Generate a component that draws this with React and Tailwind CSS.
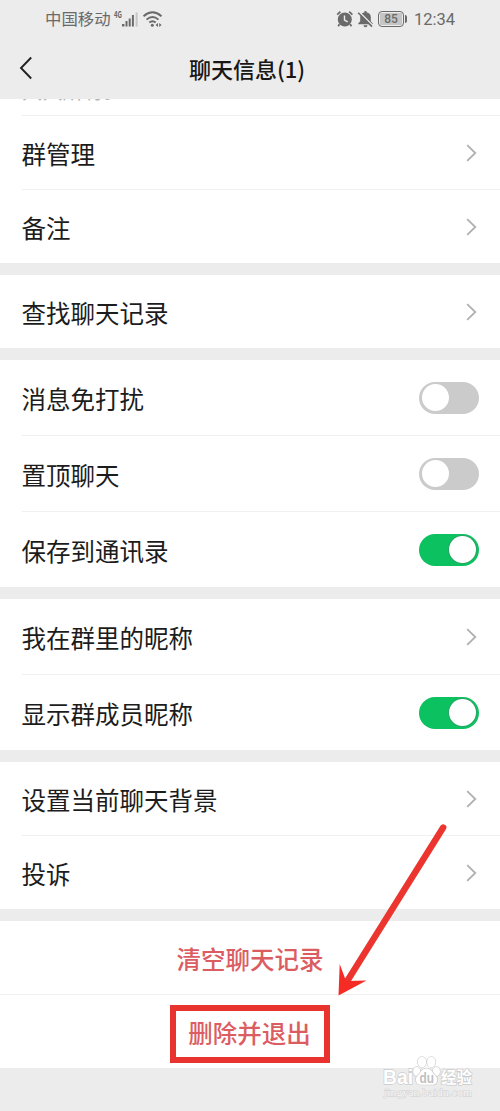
import React from "react";

function Chevron() {
  return (
    <svg className="mr-[23px] h-[18px] w-[11px]" viewBox="0 0 11 18" fill="none" stroke="#b0b0b0" strokeWidth="1.8">
      <path d="M1.2 1.2 L9.3 9 L1.2 16.8" />
    </svg>
  );
}

function Toggle({ on }) {
  return (
    <span
      className={
        "mr-[21px] flex h-8 w-[60px] items-center rounded-full px-[3px] " +
        (on ? "justify-end bg-[#0bc160]" : "justify-start bg-[#cbcbcb]")
      }
    >
      <span className={"h-[27px] w-[27px] rounded-full bg-white " + (on ? "shadow-[0_0_0_1px_#2ba566]" : "")} />
    </span>
  );
}

function Row({ label, height, divider, children }) {
  return (
    <div className={"flex bg-white pl-[22px] " + height}>
      <div className={"flex flex-1 items-center justify-between " + (divider ? "border-b border-[#f0f0f0]" : "")}>
        <span className="-ml-[0.5px] pt-[2px] text-[24.5px] leading-8 text-[#1c1c1c]">{label}</span>
        {children}
      </div>
    </div>
  );
}

function StatusBar() {
  return (
    <div className="flex h-[37px] items-center pl-[45px] text-[#6a6a6a]">
      <span className="pb-[2px] text-[16.4px] leading-5">中国移动</span>
      <svg className="ml-[2px] h-[18px] w-[51px] overflow-visible" viewBox="0 0 51 18" fill="currentColor">
        <text x="1" y="7.5" fontSize="9" fontWeight="700" textLength="8" lengthAdjust="spacingAndGlyphs">4G</text>
        <rect x="9" y="14" width="2.4" height="2.5" />
        <rect x="12.5" y="11" width="2" height="5.5" />
        <rect x="15.7" y="8.5" width="2" height="8" />
        <rect x="18.9" y="5" width="2" height="11.5" />
        <rect x="22.6" y="2.5" width="2" height="14" opacity=".3" />
        <g fill="none" stroke="currentColor" strokeWidth="1.9">
          <path d="M30.5 6.2 Q39.5 -1.6 48.5 6.2" />
          <path d="M33.5 9.6 Q39.5 4.4 45.5 9.6" />
          <path d="M36.3 12.6 Q39.5 10 42.7 12.6" />
        </g>
        <circle cx="39.3" cy="15.3" r="1.5" />
        <path d="M45 13v4l-2.4-2zM46.2 13v4l2.4-2z" />
      </svg>
      <span className="flex-1" />
      <svg className="h-[18px] w-[18px]" viewBox="0 0 18 18" fill="currentColor">
        <circle cx="8.8" cy="9.5" r="7" />
        <path d="M3.4 14.2l-1.2 2M14.2 14.2l1.2 2M1.2 4.6l3.2-3M16.4 4.6l-3.2-3" stroke="currentColor" strokeWidth="1.8" />
        <path d="M8.5 5.5v4.5l3.2 1.8" fill="none" stroke="#ececec" strokeWidth="1.4" />
      </svg>
      <svg className="ml-[3px] h-[18px] w-[17px]" viewBox="0 0 17 18" fill="currentColor">
        <path d="M8.5 1a1.3 1.3 0 0 0-1.3 1.4A4.9 4.9 0 0 0 3.2 7v4.3L1.2 13.5v.8h14.6v-.8l-2-2.2V7a4.9 4.9 0 0 0-4-4.6A1.3 1.3 0 0 0 8.5 1zM6.5 15.2h4a2 2 0 0 1-4 0z" />
        <path d="M2.3 2L16.3 16" stroke="#ececec" strokeWidth="1.6" />
        <path d="M1.2 2.8L15 16.6" stroke="currentColor" strokeWidth="1.6" />
      </svg>
      <div className="ml-[4px] flex h-[16px] w-[26px] items-center justify-center rounded-[4px] border-[1.5px] border-[#6a6a6a] p-[1px]">
        <span className="flex h-[12px] w-full items-center justify-center rounded-[1px] bg-[#c5c5c5] font-['Roboto','Noto_Sans_CJK_SC',sans-serif] text-[12px] font-medium leading-none">85</span>
      </div>
      <span className="ml-[1px] h-[8px] w-[2px] rounded-r bg-[#6a6a6a]" />
      <span className="ml-[7px] mr-[44px] w-[42px] whitespace-nowrap pt-[2px] font-['Roboto','Noto_Sans_CJK_SC',sans-serif] text-[16.5px] leading-5">12:34</span>
    </div>
  );
}

function Watermark() {
  return (
    <svg className="absolute left-[381px] top-[1055px] h-[46px] w-[96px]" viewBox="0 0 96 46">
      <g fill="#fff" stroke="#cbcbcb" strokeWidth="1.3" paintOrder="stroke">
        <ellipse cx="41" cy="7" rx="4.2" ry="5.2" />
        <ellipse cx="50.3" cy="7" rx="4.2" ry="5.2" />
        <ellipse cx="35.8" cy="16.5" rx="3.6" ry="4.6" />
        <ellipse cx="55.4" cy="16.5" rx="3.6" ry="4.6" />
        <path d="M45.5 13.5c-5 0-6 4.5-9 7.2-3 2.8-1.8 9.3 3.5 9h11.5c5 .2 6-6.2 3-9-3.2-2.7-4-7.2-9-7.2z" />
        <g className="font-['Liberation_Sans','Noto_Sans_CJK_SC',sans-serif]" fontWeight="700">
          <text x="2" y="29" fontSize="20" textLength="30" lengthAdjust="spacingAndGlyphs">Bai</text>
          <text x="60" y="28" fontSize="15.5" textLength="31" lengthAdjust="spacingAndGlyphs">经验</text>
        </g>
      </g>
      <text className="font-['Liberation_Sans',sans-serif]" x="38.5" y="27.5" fontSize="15" fontWeight="700" fill="#bfbfbf" textLength="14.5" lengthAdjust="spacingAndGlyphs">du</text>
      <text className="font-['Liberation_Serif',serif]" x="3" y="41" fontSize="11" fill="#f7f7f7" stroke="#d0d0d0" strokeWidth=".9" paintOrder="stroke" textLength="88" lengthAdjust="spacingAndGlyphs">jingyan.baidu.com</text>
    </svg>
  );
}

export default function App() {
  return (
    <main className="relative h-[1111px] w-[500px] overflow-hidden bg-[#ececec] font-['Noto_Sans_CJK_SC',sans-serif]">
      <header className="h-[99px]">
        <StatusBar />
        <div className="grid h-[62px] grid-cols-[1fr_auto_1fr] items-center">
          <svg className="ml-[19px] h-[24px] w-[14px]" viewBox="0 0 14 24" fill="none" stroke="#222" strokeWidth="1.9">
            <path d="M12.2 1.5L2 12l10.2 10.5" />
          </svg>
          <h1 className="pb-px pr-[6px] text-[22px] font-medium leading-8 text-[#171717]">聊天信息(1)</h1>
        </div>
      </header>
      <div className="flex h-[17px] bg-white pl-[22px]">
        <div className="flex h-[17px] flex-1 items-start overflow-hidden border-b border-[#f0f0f0]">
          <span className="-mt-[21px] text-[20.4px] leading-[24px] text-[#b5b5b5]">只只所有。</span>
        </div>
      </div>
      <div className="flex flex-col gap-3">
        <section>
          <Row label="群管理" height="h-[74px]" divider><Chevron /></Row>
          <Row label="备注" height="h-[73px]"><Chevron /></Row>
        </section>
        <section>
          <Row label="查找聊天记录" height="h-[73px]"><Chevron /></Row>
        </section>
        <section>
          <Row label="消息免打扰" height="h-[76px]" divider><Toggle /></Row>
          <Row label="置顶聊天" height="h-[76px]" divider><Toggle /></Row>
          <Row label="保存到通讯录" height="h-[75px]"><Toggle on /></Row>
        </section>
        <section>
          <Row label="我在群里的昵称" height="h-[76px]" divider><Chevron /></Row>
          <Row label="显示群成员昵称" height="h-[75px]"><Toggle on /></Row>
        </section>
        <section>
          <Row label="设置当前聊天背景" height="h-[74px]" divider><Chevron /></Row>
          <Row label="投诉" height="h-[73px]"><Chevron /></Row>
        </section>
        <section className="text-[24.5px] font-medium leading-8 text-[#db5d62]">
          <div className="flex h-[74px] items-center justify-center border-b border-[#f0f0f0] bg-white pt-[2px]">清空聊天记录</div>
          <div className="flex h-[73px] items-center justify-center bg-white">
            <span className="mt-[4px] flex h-[58px] w-[160px] items-center justify-center border-[6px] border-[#e9332e] pb-[1px] pr-px">删除并退出</span>
          </div>
        </section>
      </div>
      <svg className="absolute left-[330px] top-[820px] h-[180px] w-[120px]" viewBox="0 0 120 180">
        <path d="M113.2 7.5L16 163" stroke="#ec352e" strokeWidth="6.4" strokeLinecap="round" />
        <path d="M8.5 175.5L9.7 144L16 161L36.5 160.5Z" fill="#f62b24" />
      </svg>
      <Watermark />
    </main>
  );
}
